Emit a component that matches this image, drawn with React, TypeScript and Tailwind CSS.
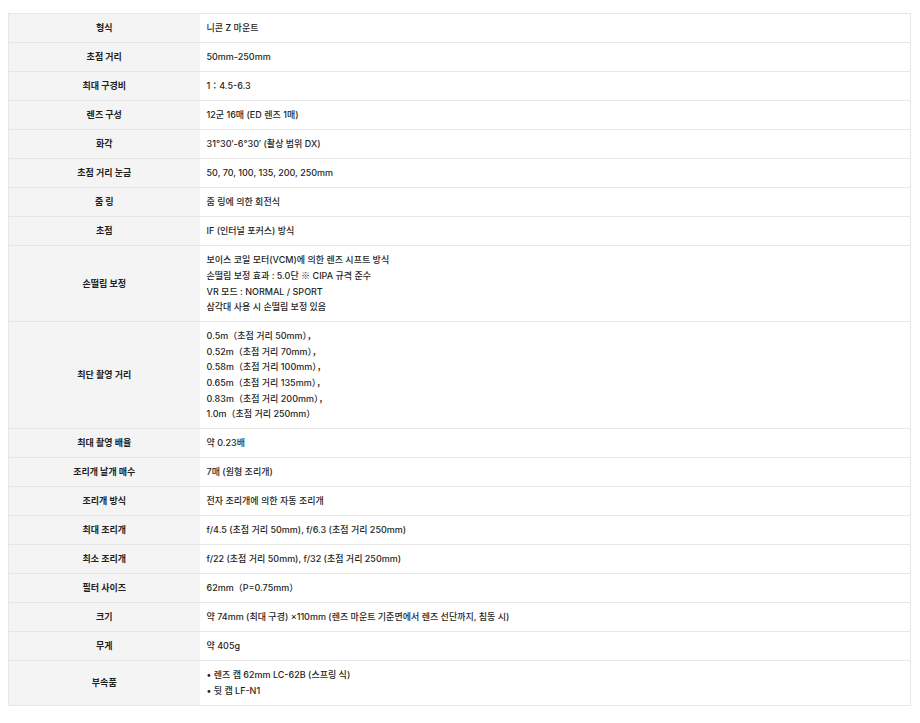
import type { ReactNode } from "react";

const Mark = () => <span className="font-['Noto_Sans_CJK_KR',sans-serif]">※</span>;

const ROWS: { label: string; value: ReactNode[]; lh?: string }[] = [
  { label: "형식", value: ["니콘 Z 마운트"] },
  { label: "초점 거리", value: ["50mm-250mm"] },
  { label: "최대 구경비", value: ["1：4.5-6.3"] },
  { label: "렌즈 구성", value: ["12군 16매 (ED 렌즈 1매)"] },
  { label: "화각", value: ["31°30′-6°30′ (촬상 범위 DX)"] },
  { label: "초점 거리 눈금", value: ["50, 70, 100, 135, 200, 250mm"] },
  { label: "줌 링", value: ["줌 링에 의한 회전식"] },
  { label: "초점", value: ["IF (인터널 포커스) 방식"] },
  {
    label: "손떨림 보정",
    lh: "leading-[15.75px]",
    value: [
      "보이스 코일 모터(VCM)에 의한 렌즈 시프트 방식",
      <>손떨림 보정 효과 : 5.0단 <Mark /> CIPA 규격 준수</>,
      "VR 모드 : NORMAL / SPORT",
      "삼각대 사용 시 손떨림 보정 있음",
    ],
  },
  {
    label: "최단 촬영 거리",
    lh: "leading-[15.67px]",
    value: [
      "0.5m（초점 거리 50mm），",
      "0.52m（초점 거리 70mm），",
      "0.58m（초점 거리 100mm），",
      "0.65m（초점 거리 135mm），",
      "0.83m（초점 거리 200mm），",
      "1.0m（초점 거리 250mm）",
    ],
  },
  { label: "최대 촬영 배율", value: ["약 0.23배"] },
  { label: "조리개 날개 매수", value: ["7매 (원형 조리개)"] },
  { label: "조리개 방식", value: ["전자 조리개에 의한 자동 조리개"] },
  { label: "최대 조리개", value: ["f/4.5 (초점 거리 50mm), f/6.3 (초점 거리 250mm)"] },
  { label: "최소 조리개", value: ["f/22 (초점 거리 50mm), f/32 (초점 거리 250mm)"] },
  { label: "필터 사이즈", value: ["62mm（P=0.75mm）"] },
  { label: "크기", value: ["약 74mm (최대 구경) ×110mm (렌즈 마운트 기준면에서 렌즈 선단까지, 침동 시)"] },
  { label: "무게", value: ["약 405g"] },
  { label: "부속품", value: ["• 렌즈 캡 62mm LC-62B (스프링 식)", "• 뒷 캡 LF-N1"] },
];

export default function App() {
  return (
    <div className="min-h-[723px] w-[920px] bg-white pl-2 pr-[9px] pt-[13px] font-['Inter','Noto_Sans_CJK_KR',sans-serif] text-[9px] text-[#1f1f1f]">
      <table className="w-full border-collapse border border-[#e6e6e6]">
        <tbody>
          {ROWS.map((r) => (
            <tr key={r.label} className={`border-b border-[#e6e6e6] ${r.lh ?? "leading-[16px]"}`}>
              <th className="w-[191px] bg-[#f4f4f4] px-2 py-1.5 text-center align-middle font-bold">
                {r.label}
              </th>
              <td className="px-[7px] py-1.5 align-middle font-medium">
                {r.value.map((v, i) => (
                  <div key={i}>{v}</div>
                ))}
              </td>
            </tr>
          ))}
        </tbody>
      </table>
    </div>
  );
}
